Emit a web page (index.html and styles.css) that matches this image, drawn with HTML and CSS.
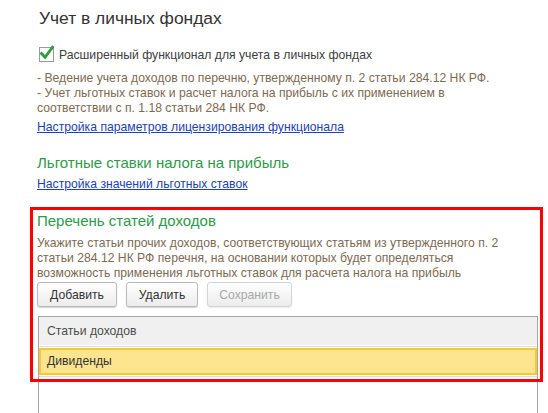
FILE: index.html
```html
<!DOCTYPE html>
<html lang="ru">
<head>
<meta charset="utf-8">
<title>Учет в личных фондах</title>
<link rel="stylesheet" href="styles.css">
</head>
<body>
<div class="page">
  <h1 class="title">Учет в личных фондах</h1>

  <label class="check-row">
    <span class="checkbox">
      <svg width="17" height="17" viewBox="0 0 17 17"><path d="M3.5 8.5 L7 12.3 L14.5 2.2" fill="none" stroke="#2f9e3a" stroke-width="2.8" stroke-linecap="square"/></svg>
    </span>
    <span class="check-label">Расширенный функционал для учета в личных фондах</span>
  </label>

  <div class="note">
    <div>- Ведение учета доходов по перечню, утвержденному п. 2 статьи 284.12 НК РФ.</div>
    <div>- Учет льготных ставок и расчет налога на прибыль с их применением в соответствии с п. 1.18 статьи 284 НК РФ.</div>
  </div>
  <div class="link-row"><a class="link" href="#">Настройка параметров лицензирования функционала</a></div>

  <h2 class="group">Льготные ставки налога на прибыль</h2>
  <div class="link-row"><a class="link" href="#">Настройка значений льготных ставок</a></div>

  <section class="income">
    <div class="highlight"></div>
    <h2 class="group group-first">Перечень статей доходов</h2>
    <div class="note note-wide">Укажите статьи прочих доходов, соответствующих статьям из утвержденного п. 2 статьи 284.12 НК РФ перечня, на основании которых будет определяться возможность применения льготных ставок для расчета налога на прибыль</div>
    <div class="toolbar">
      <button class="btn btn-add">Добавить</button>
      <button class="btn btn-del">Удалить</button>
      <button class="btn btn-save" disabled>Сохранить</button>
    </div>
    <div class="table">
      <div class="thead">Статьи доходов</div>
      <div class="row row-current">Дивиденды</div>
      <div class="row-gap"></div>
    </div>
  </section>
</div>
</body>
</html>
```

FILE: styles.css
```css
* { box-sizing: border-box; }
html, body { margin: 0; padding: 0; background: #fff; overflow: hidden; }
body {
  font-family: "Liberation Sans", Arial, sans-serif;
  font-size: 12.2px;
  color: #333;
}
.page {
  padding: 7px 11px 0 37px;
  width: 548px;
  height: 413px;
}
.title {
  margin: 0 0 0 2px;
  font-size: 17.4px;
  font-weight: normal;
  line-height: 22px;
  color: #333;
}
.check-row {
  display: flex;
  align-items: center;
  gap: 5px;
  margin: 17px 0 0 2px;
  height: 17px;
}
.checkbox {
  width: 15px;
  height: 15px;
  border: 1px solid #9a9a9a;
  background: #fff;
  display: flex;
  align-items: center;
  justify-content: center;
  overflow: visible;
}
.checkbox svg { display: block; flex: none; margin-top: -2px; }
.check-label { color: #404040; }
.note {
  margin-top: 8px;
  color: #7d6a52;
  line-height: 15px;
  width: 472px;
}
.note-wide { margin-top: 5px; }
.link-row {
  margin-top: 3px;
  height: 17px;
  line-height: 17px;
}
.link {
  color: #1c42b3;
  text-decoration: underline;
}
.group {
  margin: 17px 0 0 0;
  font-size: 15px;
  font-weight: normal;
  line-height: 20px;
  color: #2c9a49;
}
.income {
  position: relative;
  margin-top: 18px;
}
.group-first { margin-top: 0; }
.highlight {
  position: absolute;
  left: -7px;
  top: -4px;
  width: 513px;
  height: 175px;
  border: 3px solid #ff0000;
  pointer-events: none;
  z-index: 2;
}
.toolbar {
  display: flex;
  gap: 9px;
  margin-top: 1px;
  height: 25px;
}
.btn {
  font-family: inherit;
  font-size: 12.2px;
  height: 25px;
  padding: 0;
  border: 1px solid #b9b9b9;
  border-radius: 3px;
  background: linear-gradient(#ffffff, #ececec);
  box-shadow: 0 1px 1px rgba(0,0,0,0.18);
  color: #333;
}
.btn-add { width: 80px; }
.btn-del { width: 72px; }
.btn-save { width: 85px; color: #a8a8a8; border-color: #d4d4d4; box-shadow: 0 1px 1px rgba(0,0,0,0.08); }
.table {
  margin: 9px 0 0 1px;
  width: 500px;
  height: 110px;
  border: 1px solid #a6a6a6;
  border-bottom: none;
}
.thead {
  height: 29px;
  background: #f0f0f0;
  border-bottom: 1px solid #fff;
  padding-left: 8px;
  line-height: 28px;
  color: #4d4d4d;
  box-shadow: 0 1px 0 #dcdcdc;
}
.row {
  margin-top: 2px;
  height: 27px;
  line-height: 23px;
  padding-left: 6px;
  color: #333;
}
.row-current {
  background: #fde590;
  border: 2px solid #f7c830;
}
.row-gap {
  height: 2px;
  border-bottom: 1px solid #dcdcdc;
}
```
